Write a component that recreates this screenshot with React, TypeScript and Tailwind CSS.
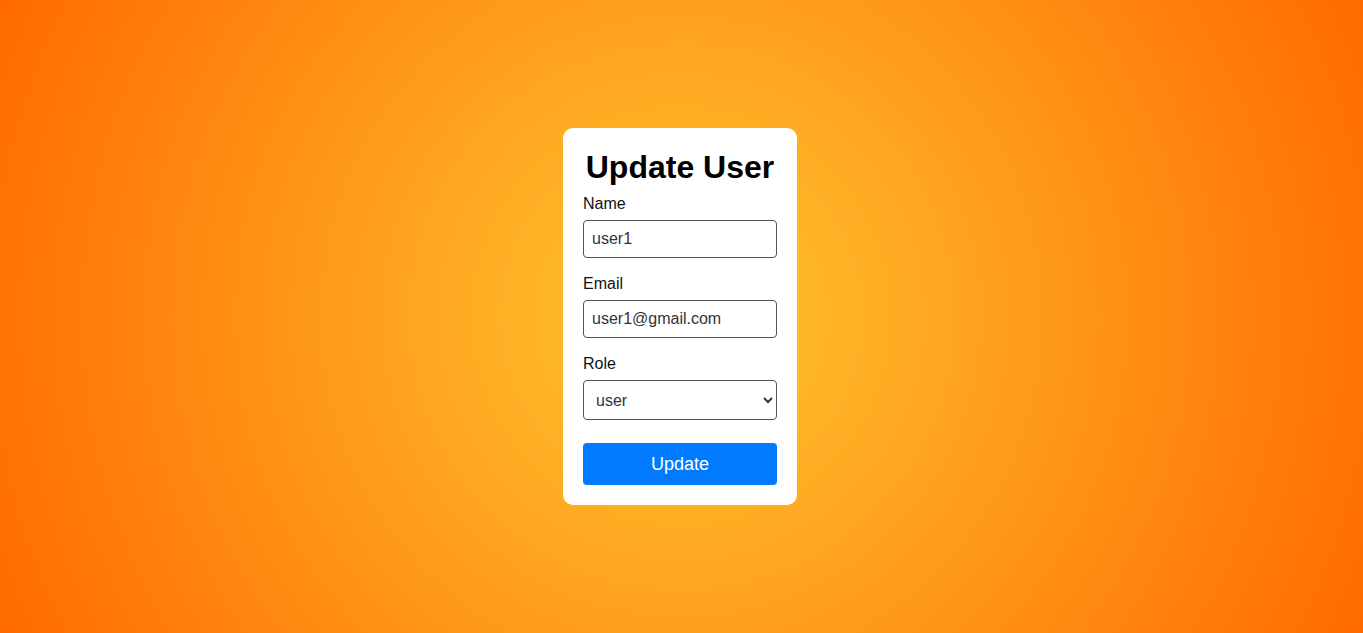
import React from "react";

export default function App() {
  return (
    <div
      className="w-full min-h-[633px] h-screen flex items-center justify-center bg-[radial-gradient(circle_at_center,#ffc631_0%,#ff6a00_100%)]"
      style={{ fontFamily: '"Liberation Sans", Arial, sans-serif' }}
    >
      <div className="w-[234px] bg-white rounded-[10px] px-5 pt-[21px] pb-5 -ml-[3px]">
        <h2 className="text-[32px] font-bold leading-[37px] text-center text-black mb-[9px]">
          Update User
        </h2>
        <label className="block text-base leading-[18px] text-[#111] mb-[7px]">Name</label>
        <input
          defaultValue="user1"
          className="block w-full h-[38px] px-2 border border-[#555] rounded-[4px] text-base text-[#333] mb-[15px] outline-none"
        />
        <label className="block text-base leading-[18px] text-[#111] pt-[2px] mb-[7px]">Email</label>
        <input
          defaultValue="user1@gmail.com"
          className="block w-full h-[38px] px-2 border border-[#555] rounded-[4px] text-base text-[#333] mb-[15px] outline-none"
        />
        <label className="block text-base leading-[18px] text-[#111] pt-[2px] mb-[7px]">Role</label>
        <select
          defaultValue="user"
          className="block w-full h-[40px] px-2 border border-[#555] rounded-[4px] text-base text-[#333] bg-white outline-none"
        >
          <option value="user">user</option>
          <option value="admin">admin</option>
        </select>
        <button className="mt-[23px] block w-full h-[42px] bg-[#007bff] text-white text-[18px] rounded-[4px]">
          Update
        </button>
      </div>
    </div>
  );
}
